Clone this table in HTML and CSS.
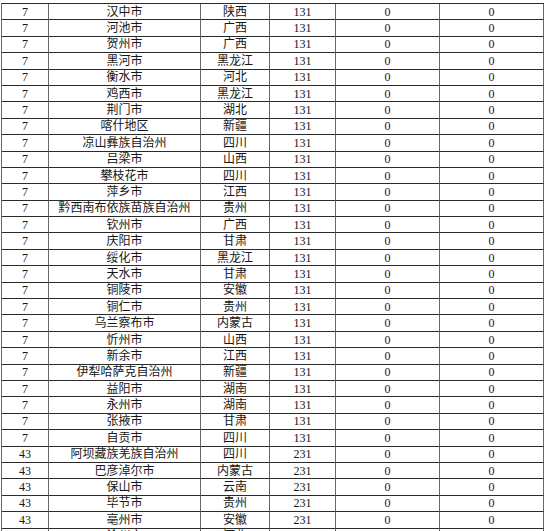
FILE: index.html
```html
<!DOCTYPE html>
<html lang="zh-CN">
<head>
<meta charset="utf-8">
<title>城市表</title>
<link rel="stylesheet" href="styles.css">
</head>
<body>
<div class="sheet">
<div class="c">7</div><div class="c">汉中市</div><div class="c">陕西</div><div class="c">131</div><div class="c">0</div><div class="c">0</div>
<div class="c">7</div><div class="c">河池市</div><div class="c">广西</div><div class="c">131</div><div class="c">0</div><div class="c">0</div>
<div class="c">7</div><div class="c">贺州市</div><div class="c">广西</div><div class="c">131</div><div class="c">0</div><div class="c">0</div>
<div class="c">7</div><div class="c">黑河市</div><div class="c">黑龙江</div><div class="c">131</div><div class="c">0</div><div class="c">0</div>
<div class="c">7</div><div class="c">衡水市</div><div class="c">河北</div><div class="c">131</div><div class="c">0</div><div class="c">0</div>
<div class="c">7</div><div class="c">鸡西市</div><div class="c">黑龙江</div><div class="c">131</div><div class="c">0</div><div class="c">0</div>
<div class="c">7</div><div class="c">荆门市</div><div class="c">湖北</div><div class="c">131</div><div class="c">0</div><div class="c">0</div>
<div class="c">7</div><div class="c">喀什地区</div><div class="c">新疆</div><div class="c">131</div><div class="c">0</div><div class="c">0</div>
<div class="c">7</div><div class="c">凉山彝族自治州</div><div class="c">四川</div><div class="c">131</div><div class="c">0</div><div class="c">0</div>
<div class="c">7</div><div class="c">吕梁市</div><div class="c">山西</div><div class="c">131</div><div class="c">0</div><div class="c">0</div>
<div class="c">7</div><div class="c">攀枝花市</div><div class="c">四川</div><div class="c">131</div><div class="c">0</div><div class="c">0</div>
<div class="c">7</div><div class="c">萍乡市</div><div class="c">江西</div><div class="c">131</div><div class="c">0</div><div class="c">0</div>
<div class="c">7</div><div class="c">黔西南布依族苗族自治州</div><div class="c">贵州</div><div class="c">131</div><div class="c">0</div><div class="c">0</div>
<div class="c">7</div><div class="c">钦州市</div><div class="c">广西</div><div class="c">131</div><div class="c">0</div><div class="c">0</div>
<div class="c">7</div><div class="c">庆阳市</div><div class="c">甘肃</div><div class="c">131</div><div class="c">0</div><div class="c">0</div>
<div class="c">7</div><div class="c">绥化市</div><div class="c">黑龙江</div><div class="c">131</div><div class="c">0</div><div class="c">0</div>
<div class="c">7</div><div class="c">天水市</div><div class="c">甘肃</div><div class="c">131</div><div class="c">0</div><div class="c">0</div>
<div class="c">7</div><div class="c">铜陵市</div><div class="c">安徽</div><div class="c">131</div><div class="c">0</div><div class="c">0</div>
<div class="c">7</div><div class="c">铜仁市</div><div class="c">贵州</div><div class="c">131</div><div class="c">0</div><div class="c">0</div>
<div class="c">7</div><div class="c">乌兰察布市</div><div class="c">内蒙古</div><div class="c">131</div><div class="c">0</div><div class="c">0</div>
<div class="c">7</div><div class="c">忻州市</div><div class="c">山西</div><div class="c">131</div><div class="c">0</div><div class="c">0</div>
<div class="c">7</div><div class="c">新余市</div><div class="c">江西</div><div class="c">131</div><div class="c">0</div><div class="c">0</div>
<div class="c">7</div><div class="c">伊犁哈萨克自治州</div><div class="c">新疆</div><div class="c">131</div><div class="c">0</div><div class="c">0</div>
<div class="c">7</div><div class="c">益阳市</div><div class="c">湖南</div><div class="c">131</div><div class="c">0</div><div class="c">0</div>
<div class="c">7</div><div class="c">永州市</div><div class="c">湖南</div><div class="c">131</div><div class="c">0</div><div class="c">0</div>
<div class="c">7</div><div class="c">张掖市</div><div class="c">甘肃</div><div class="c">131</div><div class="c">0</div><div class="c">0</div>
<div class="c">7</div><div class="c">自贡市</div><div class="c">四川</div><div class="c">131</div><div class="c">0</div><div class="c">0</div>
<div class="c">43</div><div class="c">阿坝藏族羌族自治州</div><div class="c">四川</div><div class="c">231</div><div class="c">0</div><div class="c">0</div>
<div class="c">43</div><div class="c">巴彦淖尔市</div><div class="c">内蒙古</div><div class="c">231</div><div class="c">0</div><div class="c">0</div>
<div class="c">43</div><div class="c">保山市</div><div class="c">云南</div><div class="c">231</div><div class="c">0</div><div class="c">0</div>
<div class="c">43</div><div class="c">毕节市</div><div class="c">贵州</div><div class="c">231</div><div class="c">0</div><div class="c">0</div>
<div class="c">43</div><div class="c">亳州市</div><div class="c">安徽</div><div class="c">231</div><div class="c">0</div><div class="c">0</div>
<div class="c">43</div><div class="c">沧州市</div><div class="c">河北</div><div class="c">231</div><div class="c">0</div><div class="c">0</div>
</div>
</body>
</html>
```

FILE: styles.css
```css
html, body {
  margin: 0;
  padding: 0;
  background: #ffffff;
}
body {
  padding: 3px 0 0 1px;
  overflow: hidden;
}
.sheet {
  display: grid;
  grid-template-columns: 47px 152px 69px 66px 104px 104px;
  grid-auto-rows: 16.4px;
  width: max-content;
  border-left: 1px solid #6a6a6a;
  border-top: 1px solid #2a2a2a;
  font-family: "Liberation Serif", "Noto Sans CJK SC", serif;
  font-size: 12px;
  color: #161616;
}
.c {
  display: flex;
  align-items: center;
  justify-content: center;
  border-right: 1px solid #6a6a6a;
  border-bottom: 1px solid #2a2a2a;
  line-height: 14px;
  white-space: nowrap;
  overflow: hidden;
  box-sizing: border-box;
}
```
